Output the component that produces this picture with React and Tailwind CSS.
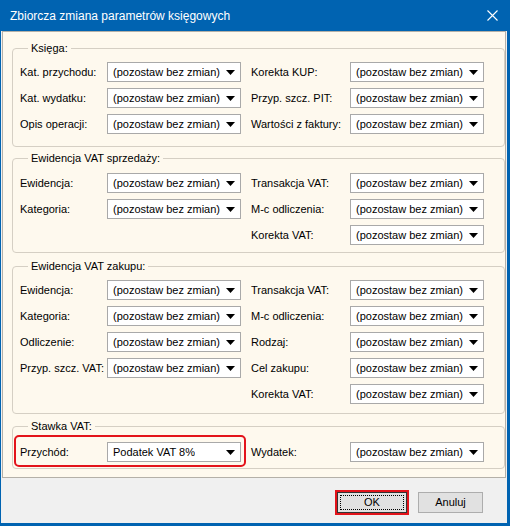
import React from "react";

const font = { fontFamily: '"Liberation Sans", Arial, sans-serif' };

function Combo({ value = "(pozostaw bez zmian)" }) {
  return (
    <div className="w-[134px] h-[20px] bg-white border border-[#a9a9a9] flex items-center justify-between pl-[5px] pr-[5px] shrink-0">
      <span className="whitespace-nowrap overflow-hidden">{value}</span>
      <svg width="9" height="5" viewBox="0 0 9 5" className="shrink-0">
        <polygon points="0,0 9,0 4.5,5" fill="#000" />
      </svg>
    </div>
  );
}

function Row({ left, leftValue, right, rightValue }) {
  return (
    <div className="flex items-center h-[20px]">
      <div className="w-[87px] shrink-0 whitespace-nowrap">{left}</div>
      {left ? <Combo value={leftValue} /> : <div className="w-[134px] shrink-0" />}
      <div className="w-[99px] ml-[10px] shrink-0 whitespace-nowrap">{right}</div>
      {right && <Combo value={rightValue} />}
    </div>
  );
}

function Group({ title, className, children }) {
  return (
    <fieldset
      className={
        "border border-[#d5cfc4] rounded-[4px] pl-[7px] pr-[10px] " + className
      }
    >
      <legend className="ml-[8px] px-[3px] leading-[14px]">{title}</legend>
      <div className="flex flex-col gap-[6px]">{children}</div>
    </fieldset>
  );
}

export default function App() {
  return (
    <div
      className="w-[510px] h-[526px] bg-[#0063b1] flex flex-col text-[11px] text-black"
      style={font}
    >
      <div className="h-[31px] flex items-center justify-between pl-[10px] pr-[12px] text-white text-[12px]">
        <span>Zbiorcza zmiana parametrów księgowych</span>
        <svg width="11" height="11" viewBox="0 0 11 11">
          <path d="M0.5 0.5 L10.5 10.5 M10.5 0.5 L0.5 10.5" stroke="#fff" strokeWidth="1.1" />
        </svg>
      </div>

      <div className="flex-1 flex flex-col ml-[1px] mr-[3px] mb-[3px] bg-[#f0f0f0]">
        <div className="ml-[1px] mr-[1px] h-[447px] border border-[#b4b0a8] bg-[#fef9ee] pl-[9px] pt-[9px]">
          <Group title="Księga:" className="pt-[7px] pb-[12px]">
            <Row left="Kat. przychodu:" right="Korekta KUP:" />
            <Row left="Kat. wydatku:" right="Przyp. szcz. PIT:" />
            <Row left="Opis operacji:" right="Wartości z faktury:" />
          </Group>

          <Group title="Ewidencja VAT sprzedaży:" className="mt-[4px] pt-[8px] pb-[7px]">
            <Row left="Ewidencja:" right="Transakcja VAT:" />
            <Row left="Kategoria:" right="M-c odliczenia:" />
            <Row right="Korekta VAT:" />
          </Group>

          <Group title="Ewidencja VAT zakupu:" className="mt-[6px] pt-[7px] pb-[9px]">
            <Row left="Ewidencja:" right="Transakcja VAT:" />
            <Row left="Kategoria:" right="M-c odliczenia:" />
            <Row left="Odliczenie:" right="Rodzaj:" />
            <Row left="Przyp. szcz. VAT:" right="Cel zakupu:" />
            <Row right="Korekta VAT:" />
          </Group>

          <Group title="Stawka VAT:" className="mt-[5px] pt-[9px] pb-[6px]">
            <div className="relative">
              <Row left="Przychód:" leftValue="Podatek VAT 8%" right="Wydatek:" />
              <div className="absolute left-[-6px] top-[-7px] w-[232px] h-[32px] border-2 border-[#e3131b] rounded-[5px] pointer-events-none" />
            </div>
          </Group>
        </div>

        <div className="flex-1 flex items-start pt-[12px] pl-[334px] gap-[8px]">
          <div className="border-[2px] border-[#e3131b] p-0">
            <button className="w-[70px] h-[21px] bg-[#e1e1e1] border border-[#333] flex items-center justify-center p-[2px]">
              <span className="w-full h-full border border-dotted border-black flex items-center justify-center">
                OK
              </span>
            </button>
          </div>
          <button className="mt-[2px] ml-[1px] w-[65px] h-[21px] bg-[#e1e1e1] border border-[#adadad] flex items-center justify-center">
            Anuluj
          </button>
        </div>
      </div>
    </div>
  );
}
